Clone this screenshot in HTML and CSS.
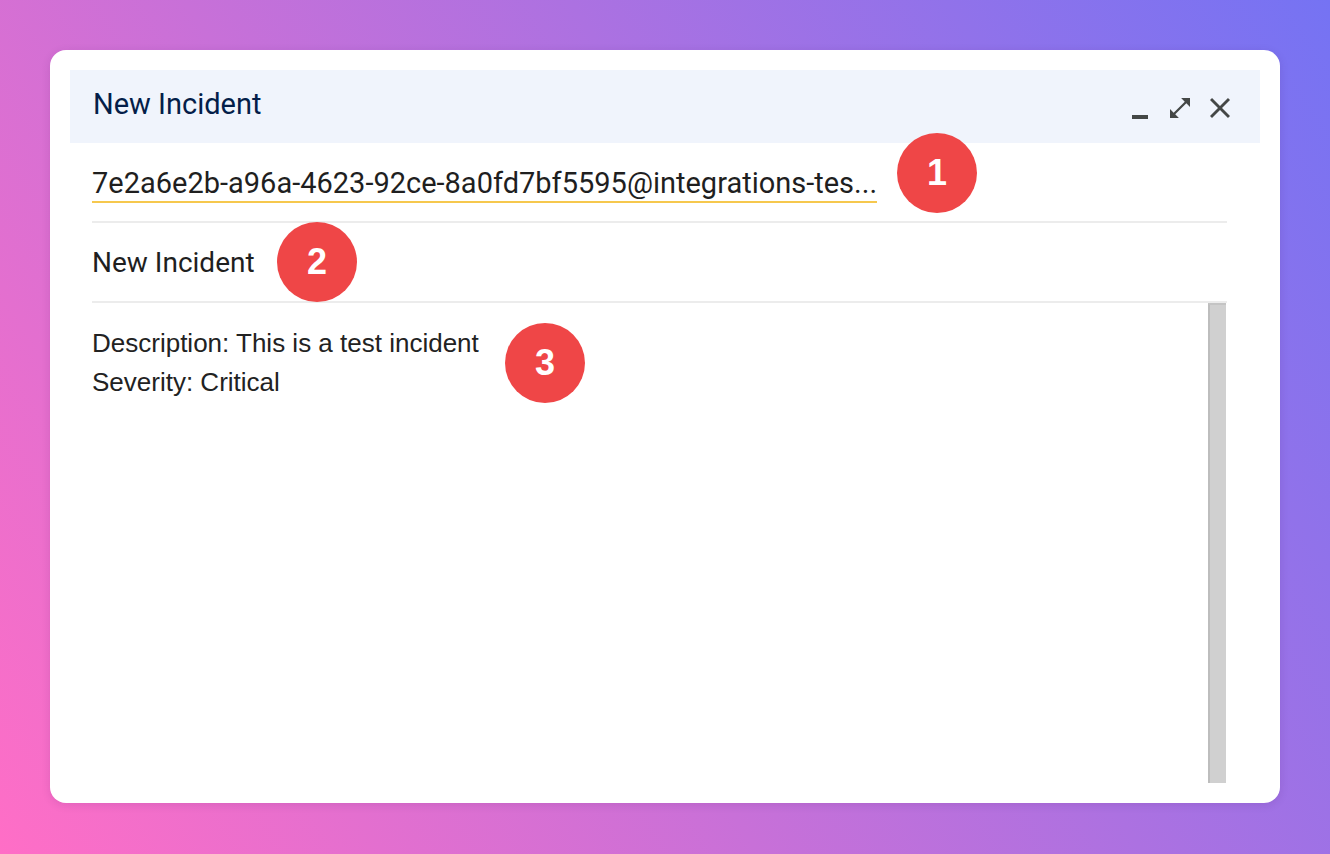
FILE: index.html
```html
<!DOCTYPE html>
<html lang="en">
<head>
  <meta charset="UTF-8" />
  <meta name="viewport" content="width=device-width, initial-scale=1.0" />
  <title>New Incident</title>
  <link rel="stylesheet" href="styles.css">
</head>
<body>
  <div class="compose">
    <!-- HEADER -->
    <div class="compose-header">
      <span class="compose-title">New Incident</span>
      <div class="window-actions">
        <span class="action action-min"><span class="min-bar"></span></span>
        <span class="action action-expand">
          <svg width="20" height="20" viewBox="3 3 18 18"><path d="M21 11V3h-8l3.29 3.29-10 10L3 13v8h8l-3.29-3.29 10-10z" fill="#444746"/></svg>
        </span>
        <span class="action action-close">
          <svg width="20" height="20" viewBox="5 5 14 14"><path d="M19 6.41L17.59 5 12 10.59 6.41 5 5 6.41 10.59 12 5 17.59 6.41 19 12 13.41 17.59 19 19 17.59 13.41 12z" fill="#444746"/></svg>
        </span>
      </div>
    </div>

    <!-- FORM -->
    <div class="compose-form">
      <div class="row row-to">
        <span class="recipient">7e2a6e2b-a96a-4623-92ce-8a0fd7bf5595@integrations-tes...</span>
      </div>
      <div class="row row-subject">
        <span class="subject">New Incident</span>
      </div>
      <div class="compose-body">
        <div class="body-text">
          <div>Description: This is a test incident</div>
          <div>Severity: Critical</div>
        </div>
        <div class="scrollbar"></div>
      </div>
    </div>

    <!-- BADGES -->
    <span class="badge badge-1">1</span>
    <span class="badge badge-2">2</span>
    <span class="badge badge-3">3</span>
  </div>
</body>
</html>
```

FILE: styles.css
```css
html,
body {
  margin: 0;
  height: 100%;
}

body {
  background: linear-gradient(56deg, #ff6ec6 0%, #7573f3 100%);
  font-family: "Roboto", "Liberation Sans", sans-serif;
  overflow: hidden;
}

.compose {
  position: relative;
  margin: 50px;
  width: 1230px;
  height: 753px;
  box-sizing: border-box;
  padding: 20px;
  background: #ffffff;
  border-radius: 16px;
  box-shadow: 0 2px 10px rgba(60, 0, 80, 0.12);
  display: flex;
  flex-direction: column;
}

.compose-header {
  height: 73px;
  flex-shrink: 0;
  background: #f0f4fc;
  display: flex;
  align-items: center;
  justify-content: space-between;
  padding: 0 30px 0 23px;
}

.compose-title {
  font-size: 29px;
  color: #041e49;
  margin-top: -5px;
}

.window-actions {
  display: flex;
  align-items: center;
  margin-top: 3px;
}

.action {
  display: flex;
  align-items: center;
  justify-content: center;
  height: 20px;
}

.action-min {
  width: 16px;
  align-items: flex-end;
  margin-right: 22px;
}

.min-bar {
  display: block;
  width: 16px;
  height: 4px;
  background: #444746;
  margin-bottom: -1px;
}

.action-expand {
  width: 20px;
  margin-right: 20px;
}

.action-close {
  width: 20px;
}

.compose-form {
  flex: 1;
  display: flex;
  flex-direction: column;
  padding: 0 33px 0 22px;
}

.row {
  height: 78px;
  flex-shrink: 0;
  border-bottom: 2px solid #ececec;
  display: flex;
  align-items: center;
}

.recipient {
  display: inline-block;
  font-size: 29px;
  line-height: 35px;
  color: #1f1f1f;
  border-bottom: 2px solid #f6c84e;
  margin-top: 4px;
}

.subject {
  font-size: 28px;
  color: #1f1f1f;
}

.compose-body {
  flex: 1;
  display: flex;
}

.body-text {
  flex: 1;
  padding-top: 21px;
  font-family: "Liberation Sans", Arial, sans-serif;
  font-size: 26px;
  line-height: 39px;
  color: #222222;
}

.scrollbar {
  width: 16px;
  margin-right: 1px;
  background: #d0d0d0;
  border-left: 2px solid #bdbdbd;
  border-top: 2px solid #c4c4c4;
}

.badge {
  position: absolute;
  width: 80px;
  height: 80px;
  border-radius: 50%;
  background: #ef4647;
  color: #ffffff;
  font-family: "Liberation Sans", Arial, sans-serif;
  font-weight: 700;
  font-size: 36px;
  display: flex;
  align-items: center;
  justify-content: center;
}

.badge-1 {
  left: 847px;
  top: 83px;
}

.badge-2 {
  left: 227px;
  top: 172px;
}

.badge-3 {
  left: 455px;
  top: 273px;
}
```
